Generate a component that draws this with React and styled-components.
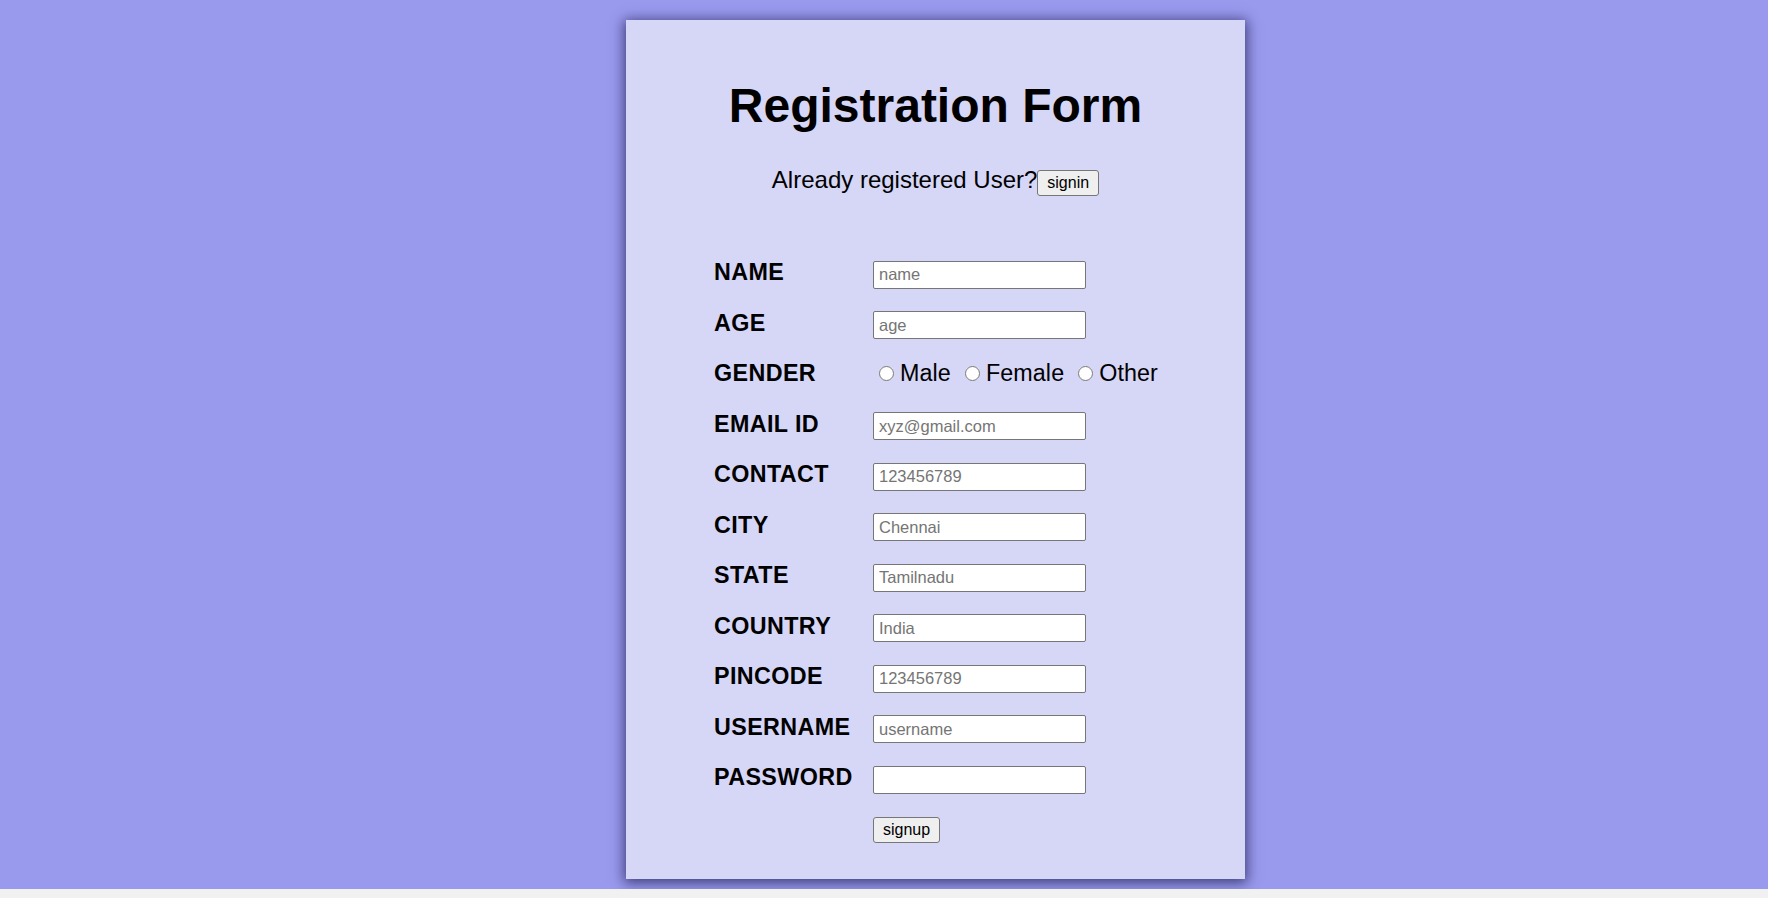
import React from "react";
import styled, { createGlobalStyle } from "styled-components";

const GlobalStyle = createGlobalStyle`
  html, body {
    margin: 0;
    padding: 0;
    background: #f1f1f1;
    font-family: "Liberation Sans", Arial, sans-serif;
  }
`;

const Page = styled.div`
  height: 889px;
  background: #9999ee;
  padding-top: 20px;
  box-sizing: border-box;
`;

const Card = styled.div`
  width: 619px;
  height: 859px;
  margin-left: 626px;
  background: #d6d6f7;
  box-shadow: 0 2px 12px 2px rgba(40, 40, 95, 0.8);
  box-sizing: border-box;
  padding-top: 58px;
`;

const Title = styled.h1`
  margin: 0;
  font-size: 48px;
  line-height: 56px;
  font-weight: bold;
  text-align: center;
  color: #000;
`;

const Already = styled.div`
  margin-top: 31.7px;
  display: flex;
  justify-content: center;
  align-items: baseline;
  font-size: 24px;
  line-height: 28px;
  color: #000;
`;

const Button = styled.button`
  font-family: "Liberation Sans", Arial, sans-serif;
  font-size: 16px;
  line-height: normal;
  padding: 3px 9px;
  border: 1px solid #767676;
  border-radius: 3px;
  background: #efefef;
  color: #000;
  cursor: pointer;
`;

const Form = styled.form`
  margin-top: 63.7px;
  padding-left: 88px;
  display: flex;
  flex-direction: column;
  gap: 19.5px;
`;

const Row = styled.div`
  display: flex;
  align-items: baseline;
  height: 31px;
  margin-top: ${p => p.$push || 0}px;
`;

const Label = styled.label`
  width: 159px;
  flex-shrink: 0;
  font-size: 23.3px;
  line-height: 27px;
  font-weight: bold;
  letter-spacing: 0.4px;
  color: #000;
`;

const Input = styled.input`
  width: 213px;
  height: 28px;
  box-sizing: border-box;
  border: 1px solid #767676;
  border-radius: 2px;
  padding: 0 5px;
  font-family: "Liberation Sans", Arial, sans-serif;
  font-size: 16.5px;
  background: #fff;
  &::placeholder {
    color: #757575;
  }
`;

const Options = styled.div`
  display: flex;
  align-items: baseline;
  gap: 8px;
`;

const Option = styled.label`
  font-size: 23.3px;
  line-height: 27px;
  letter-spacing: 0.1px;
  color: #000;
  white-space: nowrap;
  input {
    width: 15px;
    height: 15px;
    margin: 0 6px 1px 6px;
  }
`;

const fields = [
  { label: "NAME", type: "text", placeholder: "name" },
  { label: "AGE", type: "text", placeholder: "age" },
  { label: "GENDER", gender: true },
  { label: "EMAIL ID", type: "email", placeholder: "xyz@gmail.com" },
  { label: "CONTACT", type: "text", placeholder: "123456789" },
  { label: "CITY", type: "text", placeholder: "Chennai" },
  { label: "STATE", type: "text", placeholder: "Tamilnadu" },
  { label: "COUNTRY", type: "text", placeholder: "India" },
  { label: "PINCODE", type: "text", placeholder: "123456789" },
  { label: "USERNAME", type: "text", placeholder: "username" },
  { label: "PASSWORD", type: "password", placeholder: "" },
];

const App = () => (
  <>
    <GlobalStyle />
    <Page>
      <Card>
        <Title>Registration Form</Title>
        <Already>
          Already registered User?<Button type="button">signin</Button>
        </Already>
        <Form onSubmit={e => e.preventDefault()}>
          {fields.map(f => (
            <Row key={f.label}>
              <Label>{f.label}</Label>
              {f.gender ? (
                <Options>
                  <Option>
                    <input type="radio" name="gender" />Male
                  </Option>
                  <Option>
                    <input type="radio" name="gender" />Female
                  </Option>
                  <Option>
                    <input type="radio" name="gender" />Other
                  </Option>
                </Options>
              ) : (
                <Input type={f.type} placeholder={f.placeholder} />
              )}
            </Row>
          ))}
          <Row $push={2}>
            <Label />
            <Button type="submit">signup</Button>
          </Row>
        </Form>
      </Card>
    </Page>
  </>
);

export default App;
